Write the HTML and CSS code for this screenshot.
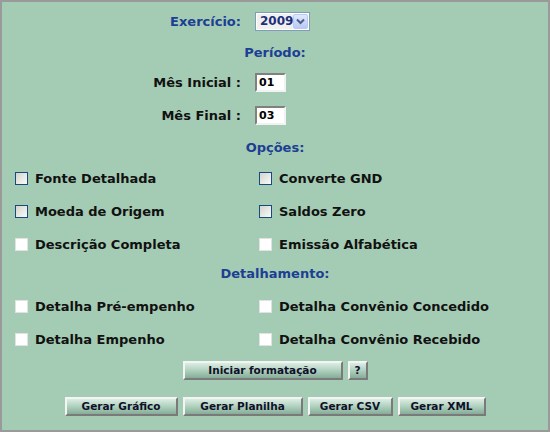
FILE: index.html
```html
<!DOCTYPE html>
<html lang="pt">
<head>
  <meta charset="UTF-8">
  <title>Relatório - Opções</title>
  <link rel="stylesheet" href="styles.css">
</head>
<body>
  <div class="frame">
    <div class="form">
      <div class="label head">Exercício:</div>
      <div class="field">
        <span class="select">
          <span class="select-value">2009</span>
          <span class="select-arrow">
            <svg width="9" height="7" viewBox="0 0 9 7"><path d="M1 1.5 L4.5 5 L8 1.5" fill="none" stroke="#4d6185" stroke-width="2"/></svg>
          </span>
        </span>
      </div>

      <div class="title">Período:</div>

      <div class="label">Mês Inicial :</div>
      <div class="field"><span class="textbox">01</span></div>

      <div class="label">Mês Final :</div>
      <div class="field"><span class="textbox">03</span></div>

      <div class="title">Opções:</div>

      <div class="check left"><span class="box blue"></span>Fonte Detalhada</div>
      <div class="check right"><span class="box blue"></span>Converte GND</div>

      <div class="check left"><span class="box blue"></span>Moeda de Origem</div>
      <div class="check right"><span class="box blue"></span>Saldos Zero</div>

      <div class="check left"><span class="box"></span>Descrição Completa</div>
      <div class="check right"><span class="box"></span>Emissão Alfabética</div>

      <div class="title">Detalhamento:</div>

      <div class="check left"><span class="box"></span>Detalha Pré-empenho</div>
      <div class="check right"><span class="box"></span>Detalha Convênio Concedido</div>

      <div class="check left"><span class="box"></span>Detalha Empenho</div>
      <div class="check right"><span class="box"></span>Detalha Convênio Recebido</div>

      <div class="buttons">
        <button class="btn wide">Iniciar formatação</button>
        <button class="btn help">?</button>
      </div>

      <div class="buttons">
        <button class="btn w113">Gerar Gráfico</button>
        <button class="btn w119">Gerar Planilha</button>
        <button class="btn w84">Gerar CSV</button>
        <button class="btn w87">Gerar XML</button>
      </div>
    </div>
  </div>
</body>
</html>
```

FILE: styles.css
```css
body {
  margin: 0;
  font-family: "DejaVu Sans", Verdana, sans-serif;
  font-weight: bold;
  font-size: 13px;
}
.frame {
  box-sizing: border-box;
  width: 550px;
  height: 432px;
  border: 2px solid #9a9a9a;
  background-color: #a4cbb3;
}
.form {
  display: grid;
  grid-template-columns: 246px 1fr;
  grid-template-rows: 38px 24px 36px 30px 34px 29px 37px 28px 30px 36px 30px 32px 40px;
}
.label {
  display: flex;
  align-items: center;
  justify-content: flex-end;
  padding-right: 7px;
  color: #111;
}
.label.head {
  color: #1c3f94;
}
.field {
  display: flex;
  align-items: center;
  padding-left: 7px;
}
.title {
  grid-column: 1 / 3;
  display: flex;
  align-items: center;
  justify-content: center;
  color: #1c3f94;
}
.select {
  display: flex;
  align-items: center;
  box-sizing: border-box;
  width: 55px;
  height: 19px;
  border: 1px solid #7f9db9;
  background: white;
  padding: 1px;
}
.select-value {
  flex: 1;
  padding-left: 3px;
  font-size: 12px;
  color: #1c2f7a;
  background: #f0f0f0;
  height: 15px;
  line-height: 15px;
}
.select-arrow {
  display: flex;
  align-items: center;
  justify-content: center;
  width: 15px;
  height: 15px;
  box-sizing: border-box;
  border: 1px solid #b9c9ef;
  border-radius: 2px;
  background: linear-gradient(#dfe8fd, #b7c9f5);
}
.textbox {
  box-sizing: border-box;
  width: 31px;
  height: 19px;
  padding-left: 2px;
  line-height: 15px;
  font-size: 11px;
  color: #000;
  background: white;
  border: 2px solid;
  border-color: #808080 #f2f2f2 #f2f2f2 #808080;
}
.check {
  display: flex;
  align-items: center;
  color: #111;
}
.check.left {
  padding-left: 13px;
}
.check.right {
  padding-left: 11px;
}
.box {
  box-sizing: border-box;
  width: 13px;
  height: 13px;
  margin-right: 7px;
  background: white;
  border: 1px solid #e2e2e2;
}
.box.blue {
  border: 1px solid #174a7e;
  background-color: #1c5180;
  background-image: linear-gradient(135deg, #d4d4ce, #fafaf8);
  background-clip: padding-box;
}
.buttons {
  grid-column: 1 / 3;
  display: flex;
  justify-content: center;
  align-items: center;
  gap: 5px;
}
.btn {
  box-sizing: border-box;
  height: 19px;
  padding: 0;
  font-family: "DejaVu Sans", Verdana, sans-serif;
  font-weight: bold;
  font-size: 10.5px;
  color: #10102a;
  border: 2px solid;
  border-color: #f4f4f4 #7a7a7a #7a7a7a #f4f4f4;
  background: linear-gradient(#dcede4, #aacdb9 55%, #86ad99);
}
.btn.wide {
  width: 160px;
}
.btn.help {
  width: 20px;
}
.btn.w113 {
  width: 113px;
}
.btn.w119 {
  width: 120px;
}
.btn.w84 {
  width: 85px;
}
.btn.w87 {
  width: 88px;
}
```
